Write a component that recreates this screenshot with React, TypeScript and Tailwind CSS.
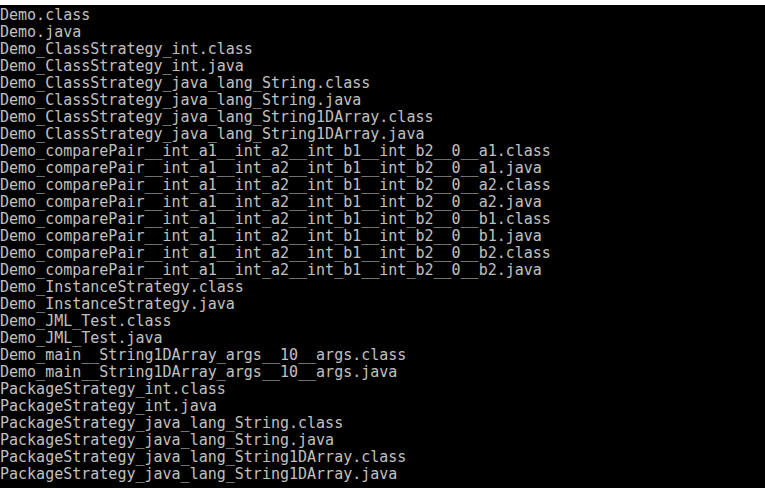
const files = [
  'Demo.class',
  'Demo.java',
  'Demo_ClassStrategy_int.class',
  'Demo_ClassStrategy_int.java',
  'Demo_ClassStrategy_java_lang_String.class',
  'Demo_ClassStrategy_java_lang_String.java',
  'Demo_ClassStrategy_java_lang_String1DArray.class',
  'Demo_ClassStrategy_java_lang_String1DArray.java',
  'Demo_comparePair__int_a1__int_a2__int_b1__int_b2__0__a1.class',
  'Demo_comparePair__int_a1__int_a2__int_b1__int_b2__0__a1.java',
  'Demo_comparePair__int_a1__int_a2__int_b1__int_b2__0__a2.class',
  'Demo_comparePair__int_a1__int_a2__int_b1__int_b2__0__a2.java',
  'Demo_comparePair__int_a1__int_a2__int_b1__int_b2__0__b1.class',
  'Demo_comparePair__int_a1__int_a2__int_b1__int_b2__0__b1.java',
  'Demo_comparePair__int_a1__int_a2__int_b1__int_b2__0__b2.class',
  'Demo_comparePair__int_a1__int_a2__int_b1__int_b2__0__b2.java',
  'Demo_InstanceStrategy.class',
  'Demo_InstanceStrategy.java',
  'Demo_JML_Test.class',
  'Demo_JML_Test.java',
  'Demo_main__String1DArray_args__10__args.class',
  'Demo_main__String1DArray_args__10__args.java',
  'PackageStrategy_int.class',
  'PackageStrategy_int.java',
  'PackageStrategy_java_lang_String.class',
  'PackageStrategy_java_lang_String.java',
  'PackageStrategy_java_lang_String1DArray.class',
  'PackageStrategy_java_lang_String1DArray.java',
];

// console window: thin white strip on top, black body, light gray text
const App = () => {
  return (
    <div className="w-[765px] h-[488px] bg-white overflow-hidden">
      <div className="mt-[5px] h-[483px] bg-black pt-px text-[#c0c0c0] font-['DejaVu_Sans_Mono',monospace] text-[15px]">
        {files.map((f, i) => (
          <div key={i} className="h-[17px] leading-[18px] whitespace-pre">{f}</div>
        ))}
      </div>
    </div>
  );
};

export default App;
